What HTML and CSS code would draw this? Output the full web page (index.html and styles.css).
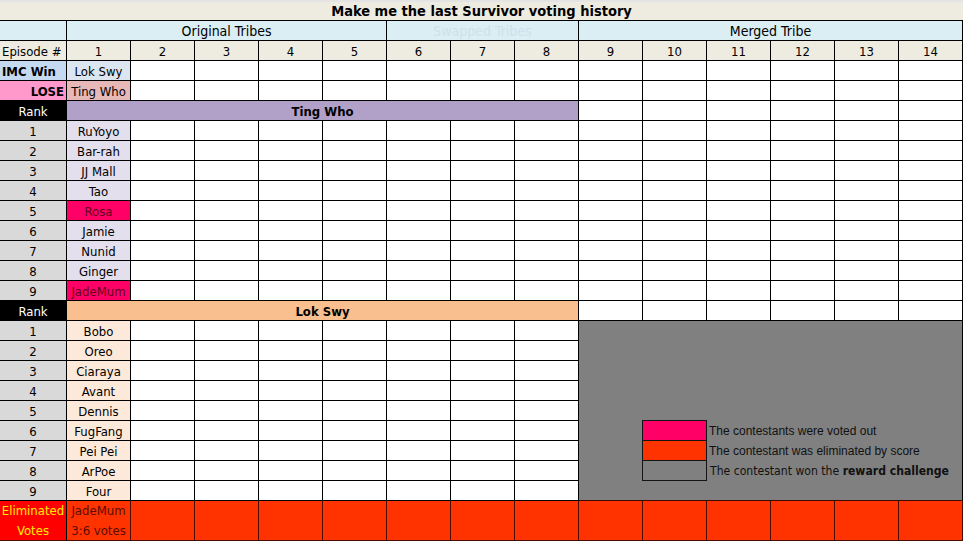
FILE: index.html
```html
<!DOCTYPE html>
<html lang="en">
<head>
<meta charset="utf-8">
<title>Make me the last Survivor voting history</title>
<link rel="stylesheet" href="styles.css">
</head>
<body>
<div class="sheet">
  <div class="title">Make me the last Survivor voting history</div>

  <div class="hdr"></div>
  <div class="hdr big s5">Original Tribes</div>
  <div class="hdr big faint s3">Swapped Tribes</div>
  <div class="hdr big s6">Merged Tribe</div>

  <div class="beige left">Episode #</div>
  <div class="beige">1</div><div class="beige">2</div><div class="beige">3</div><div class="beige">4</div><div class="beige">5</div><div class="beige">6</div><div class="beige">7</div><div class="beige">8</div><div class="beige">9</div><div class="beige">10</div><div class="beige">11</div><div class="beige">12</div><div class="beige">13</div><div class="beige">14</div>

  <div class="imc left b">IMC Win</div><div class="lokwin">Lok Swy</div>
  <div></div><div></div><div></div><div></div><div></div><div></div><div></div><div></div><div></div><div></div><div></div><div></div><div></div>

  <div class="lose right b">LOSE</div><div class="tinglose">Ting Who</div>
  <div></div><div></div><div></div><div></div><div></div><div></div><div></div><div></div><div></div><div></div><div></div><div></div><div></div>

  <div class="rank">Rank</div><div class="tinghead b s8">Ting Who</div>
  <div></div><div></div><div></div><div></div><div></div><div></div>

  <div class="num">1</div><div class="tname">RuYoyo</div>
  <div></div><div></div><div></div><div></div><div></div><div></div><div></div><div></div><div></div><div></div><div></div><div></div><div></div>
  <div class="num">2</div><div class="tname">Bar-rah</div>
  <div></div><div></div><div></div><div></div><div></div><div></div><div></div><div></div><div></div><div></div><div></div><div></div><div></div>
  <div class="num">3</div><div class="tname">JJ Mall</div>
  <div></div><div></div><div></div><div></div><div></div><div></div><div></div><div></div><div></div><div></div><div></div><div></div><div></div>
  <div class="num">4</div><div class="tname">Tao</div>
  <div></div><div></div><div></div><div></div><div></div><div></div><div></div><div></div><div></div><div></div><div></div><div></div><div></div>
  <div class="num">5</div><div class="voted">Rosa</div>
  <div></div><div></div><div></div><div></div><div></div><div></div><div></div><div></div><div></div><div></div><div></div><div></div><div></div>
  <div class="num">6</div><div class="tname">Jamie</div>
  <div></div><div></div><div></div><div></div><div></div><div></div><div></div><div></div><div></div><div></div><div></div><div></div><div></div>
  <div class="num">7</div><div class="tname">Nunid</div>
  <div></div><div></div><div></div><div></div><div></div><div></div><div></div><div></div><div></div><div></div><div></div><div></div><div></div>
  <div class="num">8</div><div class="tname">Ginger</div>
  <div></div><div></div><div></div><div></div><div></div><div></div><div></div><div></div><div></div><div></div><div></div><div></div><div></div>
  <div class="num">9</div><div class="voted">JadeMum</div>
  <div></div><div></div><div></div><div></div><div></div><div></div><div></div><div></div><div></div><div></div><div></div><div></div><div></div>

  <div class="rank">Rank</div><div class="lokhead b s8">Lok Swy</div>
  <div></div><div></div><div></div><div></div><div></div><div></div>

  <div class="legend-area">
    <div class="legend">
      <div class="legend-row"><span class="swatch sw-pink"></span><span class="ltxt">The contestants were voted out</span></div>
      <div class="legend-row"><span class="swatch sw-red"></span><span class="ltxt">The contestant was eliminated by score</span></div>
      <div class="legend-row"><span class="swatch sw-gray"></span><span class="ltxt alt">The contestant won the <b>reward challenge</b></span></div>
    </div>
  </div>

  <div class="num">1</div><div class="lname">Bobo</div>
  <div></div><div></div><div></div><div></div><div></div><div></div><div></div>
  <div class="num">2</div><div class="lname">Oreo</div>
  <div></div><div></div><div></div><div></div><div></div><div></div><div></div>
  <div class="num">3</div><div class="lname">Ciaraya</div>
  <div></div><div></div><div></div><div></div><div></div><div></div><div></div>
  <div class="num">4</div><div class="lname">Avant</div>
  <div></div><div></div><div></div><div></div><div></div><div></div><div></div>
  <div class="num">5</div><div class="lname">Dennis</div>
  <div></div><div></div><div></div><div></div><div></div><div></div><div></div>
  <div class="num">6</div><div class="lname">FugFang</div>
  <div></div><div></div><div></div><div></div><div></div><div></div><div></div>
  <div class="num">7</div><div class="lname">Pei Pei</div>
  <div></div><div></div><div></div><div></div><div></div><div></div><div></div>
  <div class="num">8</div><div class="lname">ArPoe</div>
  <div></div><div></div><div></div><div></div><div></div><div></div><div></div>
  <div class="num">9</div><div class="lname">Four</div>
  <div></div><div></div><div></div><div></div><div></div><div></div><div></div>

  <div class="elimlab">Eliminated<br>Votes</div>
  <div class="elim elimname">JadeMum<br>3:6 votes</div>
  <div class="elim"></div><div class="elim"></div><div class="elim"></div><div class="elim"></div><div class="elim"></div><div class="elim"></div><div class="elim"></div><div class="elim"></div><div class="elim"></div><div class="elim"></div><div class="elim"></div><div class="elim"></div><div class="elim"></div>
</div>
</body>
</html>
```
FILE: styles.css
```css
body {
  margin: 0;
  background: #fff;
  font-family: "DejaVu Sans Condensed", "DejaVu Sans", sans-serif;
  font-stretch: condensed;
  font-size: 13px;
  color: #000;
}

.sheet {
  display: grid;
  grid-template-columns: 67px repeat(14, 64px);
  grid-template-rows: 21px repeat(24, 20px) 40px;
  width: 963px;
  height: 541px;
}

.sheet > div {
  box-sizing: border-box;
  border-right: 1px solid #000;
  border-bottom: 1px solid #000;
  display: flex;
  align-items: center;
  justify-content: center;
  white-space: nowrap;
  overflow: hidden;
  background: #fff;
  padding-top: 1px;
}

.sheet > .title {
  grid-column: 1 / -1;
  border-right: none;
  border-top: 2px solid #e4e4e4;
  background: #eeece1;
  font-weight: bold;
  font-size: 14.5px;
  padding-top: 0;
}

.s3 { grid-column: span 3; }
.s5 { grid-column: span 5; }
.s6 { grid-column: span 6; }
.s8 { grid-column: span 8; }

.b { font-weight: bold; }
.sheet > .left { justify-content: flex-start; padding-left: 2px; }
.sheet > .right { justify-content: flex-end; padding-right: 2px; }

.sheet > .hdr { background: #daeef3; }
.sheet > .big { font-size: 14px; }
.faint { color: #cde2ec; }

.sheet > .beige { background: #eeece1; }
.sheet > .imc { background: #c5d9f1; }
.sheet > .lokwin { background: #dce6f1; }
.sheet > .lose { background: #ff99cc; }
.sheet > .tinglose { background: #e6b8b7; }

.sheet > .rank { background: #000; color: #fff; }
.sheet > .tinghead { background: #b1a0c7; }
.sheet > .lokhead { background: #fabf8f; }

.sheet > .num { background: #d9d9d9; }
.sheet > .tname { background: #e4dfec; }
.sheet > .lname { background: #fde9d9; }
.sheet > .voted { background: #ff0066; color: #66001a; }

.sheet > .legend-area {
  grid-column: 10 / 16;
  grid-row: 17 / 26;
  background: #808080;
  border-bottom-color: #3a0a00;
  display: block;
  padding: 99px 0 0 63px;
}

.legend { display: flex; flex-direction: column; }
.legend-row { display: flex; align-items: center; height: 20px; }
.swatch {
  box-sizing: border-box;
  width: 65px;
  height: 21px;
  border: 1px solid #141414;
  flex: none;
  align-self: flex-start;
}
.sw-pink { background: #ff0066; }
.sw-red { background: #ff3300; }
.sw-gray { background: #808080; }
.ltxt {
  margin-left: 2px;
  padding-top: 2px;
  font-family: "Liberation Sans", Arial, sans-serif;
  font-stretch: normal;
  font-size: 12px;
  color: #111;
}
.ltxt.alt {
  font-family: "DejaVu Sans Condensed", "DejaVu Sans", sans-serif;
  font-stretch: condensed;
  font-size: 12.1px;
  margin-left: 3px;
}

.sheet > .elim {
  background: #ff3300;
  border-right-color: #4a0c00;
  border-bottom-color: #4a0c00;
}
.sheet > .elimlab {
  background: #ff0000;
  color: #ffee00;
  border-bottom-color: #4a0c00;
  text-align: center;
  line-height: 20px;
}
.sheet > .elimname {
  color: #5a0c00;
  text-align: center;
  line-height: 20px;
}
```
